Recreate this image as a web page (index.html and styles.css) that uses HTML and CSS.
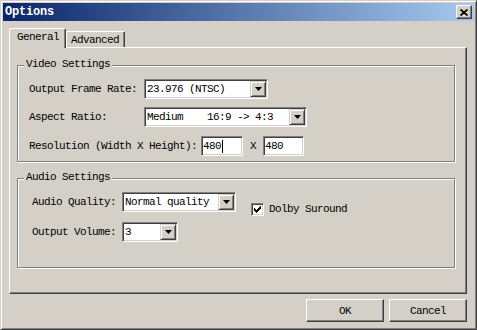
FILE: index.html
```html
<!DOCTYPE html>
<html>
<head>
<meta charset="utf-8">
<link rel="stylesheet" href="styles.css">
</head>
<body>
<div class="window">
  <div class="titlebar">
    <span class="title">Options</span>
    <div class="close"><svg width="8" height="7" viewBox="0 0 8 7"><path d="M0.5 0.5 L7.5 6.5 M7.5 0.5 L0.5 6.5" stroke="#000" stroke-width="1.7"/></svg></div>
  </div>
  <div class="content">
    <div class="tabs">
      <div class="tab active">General</div>
      <div class="tab">Advanced</div>
    </div>
    <div class="panel">
      <div class="group video">
        <span class="legend">Video Settings</span>
        <div class="row">
          <span class="lbl lbl-v">Output Frame Rate:</span>
          <div class="combo c1"><span class="val">23.976 (NTSC)</span><span class="arrow"><svg width="7" height="4" viewBox="0 0 7 4"><path d="M0 0H7L3.5 4Z" fill="#000"/></svg></span></div>
        </div>
        <div class="row">
          <span class="lbl lbl-v">Aspect Ratio:</span>
          <div class="combo c2"><span class="val">Medium    16:9 -&gt; 4:3</span><span class="arrow"><svg width="7" height="4" viewBox="0 0 7 4"><path d="M0 0H7L3.5 4Z" fill="#000"/></svg></span></div>
        </div>
        <div class="row r3">
          <span class="lbl lbl-res">Resolution (Width X Height):</span>
          <div class="edit"><span>480</span><span class="caret"></span></div>
          <span class="lbl x">X</span>
          <div class="edit e2"><span>480</span></div>
        </div>
      </div>
      <div class="group audio">
        <span class="legend">Audio Settings</span>
        <div class="col">
          <div class="row">
            <span class="lbl lbl-a">Audio Quality:</span>
            <div class="combo c3"><span class="val">Normal quality</span><span class="arrow"><svg width="7" height="4" viewBox="0 0 7 4"><path d="M0 0H7L3.5 4Z" fill="#000"/></svg></span></div>
          </div>
          <div class="row ra2">
            <span class="lbl lbl-a">Output Volume:</span>
            <div class="combo c4"><span class="val">3</span><span class="arrow"><svg width="7" height="4" viewBox="0 0 7 4"><path d="M0 0H7L3.5 4Z" fill="#000"/></svg></span></div>
          </div>
        </div>
        <div class="checkrow">
          <span class="check"><svg width="7" height="7" viewBox="0 0 7 7" shape-rendering="crispEdges"><path d="M0 2H1V3H2V4H3V3H4V2H5V1H6V0H7V3H6V4H5V5H4V6H3V7H2V6H1V5H0Z" fill="#000"/></svg></span>
          <span class="lbl">Dolby Suround</span>
        </div>
      </div>
    </div>
    <div class="buttons">
      <div class="btn">OK</div>
      <div class="btn">Cancel</div>
    </div>
  </div>
</div>
</body>
</html>
```
FILE: styles.css
```css
html, body {
  margin: 0;
  padding: 0;
  background: #d4d0c8;
}
body {
  font-family: "Liberation Mono", "DejaVu Sans Mono", monospace;
  font-size: 11px;
  letter-spacing: -0.6px;
  color: #000;
}
.window {
  width: 477px;
  height: 330px;
  box-sizing: border-box;
  border: 1px solid;
  border-color: #d4d0c8 #404040 #404040 #d4d0c8;
  box-shadow: inset 1px 1px #fff, inset -1px -1px #808080;
  padding: 2px;
  background: #d4d0c8;
}
.titlebar {
  height: 18px;
  display: flex;
  align-items: center;
  justify-content: space-between;
  background: linear-gradient(to right, #0a246a, #a6caf0);
}
.title {
  color: #fff;
  font-weight: bold;
  font-size: 12px;
  letter-spacing: -0.2px;
  padding-left: 2px;
  line-height: 18px;
}
.close {
  width: 16px;
  height: 14px;
  box-sizing: border-box;
  margin-right: 2px;
  background: #d4d0c8;
  border: 1px solid;
  border-color: #fff #404040 #404040 #fff;
  box-shadow: inset -1px -1px #808080;
  display: flex;
  align-items: center;
  justify-content: center;
}
.close svg { display: block; margin-left: -1px; }
.content {
  padding: 7px 7px 0 6px;
}
.tabs {
  display: flex;
  align-items: flex-end;
  height: 19px;
}
.tab {
  box-sizing: border-box;
  height: 16px;
  width: 59px;
  padding: 1px 0 0 4px;
  line-height: 14px;
  border-left: 1px solid #fff;
  border-top: 1px solid #fff;
  border-right: 1px solid #404040;
  box-shadow: inset -1px 0 #808080;
  border-top-left-radius: 2px;
  border-top-right-radius: 2px;
}
.tab.active {
  position: relative;
  z-index: 1;
  height: 20px;
  width: 57px;
  margin-bottom: -1px;
  padding: 1px 0 0 7px;
  background: #d4d0c8;
}
.panel {
  box-sizing: border-box;
  width: 458px;
  height: 247px;
  border: 1px solid;
  border-color: #fff #404040 #404040 #fff;
  box-shadow: inset -1px -1px #808080;
  padding: 17px 0 0 7px;
}
.group {
  position: relative;
  box-sizing: border-box;
  width: 438px;
  border: 1px solid #808080;
  box-shadow: 1px 1px #fff, inset 1px 1px #fff;
}
.legend {
  position: absolute;
  left: 6px;
  top: -9px;
  padding: 0 2px;
  line-height: 14px;
  background: #d4d0c8;
}
.video {
  height: 97px;
  padding: 13px 0 0 11px;
}
.audio {
  height: 90px;
  margin-top: 16px;
  padding: 13px 0 0 14px;
  display: flex;
  align-items: flex-start;
}
.row {
  display: flex;
  align-items: center;
  height: 20px;
}
.row + .row { margin-top: 8px; }
.row.r3 { margin-top: 9px; }
.row.ra2 { margin-top: 10px; }
.lbl { white-space: pre; line-height: 14px; }
.lbl-v { width: 115px; }
.lbl-res { margin-right: 4px; }
.lbl-a { width: 90px; }
.x { margin: 0 7px; }
.combo, .edit {
  box-sizing: border-box;
  height: 20px;
  border: 1px solid;
  border-color: #808080 #fff #fff #808080;
  box-shadow: inset 1px 1px #404040, inset -1px -1px #d4d0c8;
  background: #fff;
  padding: 1px;
  display: flex;
  align-items: center;
}
.c1 { width: 124px; }
.c2 { width: 163px; }
.c3 { width: 114px; }
.c4 { width: 56px; }
.val {
  flex: 1;
  white-space: pre;
  padding-left: 1px;
  line-height: 16px;
  overflow: hidden;
}
.arrow {
  box-sizing: border-box;
  width: 16px;
  height: 16px;
  background: #d4d0c8;
  border: 1px solid;
  border-color: #d4d0c8 #404040 #404040 #d4d0c8;
  box-shadow: inset 1px 1px #fff, inset -1px -1px #808080;
  display: flex;
  align-items: center;
  justify-content: center;
}
.arrow svg { display: block; }
.edit {
  width: 42px;
  padding: 1px 1px 1px 1px;
}
.edit.e2 { width: 41px; }
.caret {
  width: 1px;
  height: 13px;
  background: #000;
  margin-left: 1px;
}
.checkrow {
  display: flex;
  align-items: center;
  margin: 10px 0 0 15px;
}
.check {
  box-sizing: border-box;
  width: 13px;
  height: 13px;
  border: 1px solid;
  border-color: #808080 #fff #fff #808080;
  box-shadow: inset 1px 1px #404040, inset -1px -1px #d4d0c8;
  background: #fff;
  display: flex;
  align-items: center;
  justify-content: center;
  margin-right: 5px;
}
.check svg { display: block; }
.buttons {
  display: flex;
  justify-content: flex-end;
  gap: 5px;
  margin-top: 5px;
}
.btn {
  box-sizing: border-box;
  width: 78px;
  height: 23px;
  border: 1px solid;
  border-color: #fff #404040 #404040 #fff;
  box-shadow: inset -1px -1px #808080;
  display: flex;
  align-items: center;
  justify-content: center;
  line-height: 14px;
}
```
